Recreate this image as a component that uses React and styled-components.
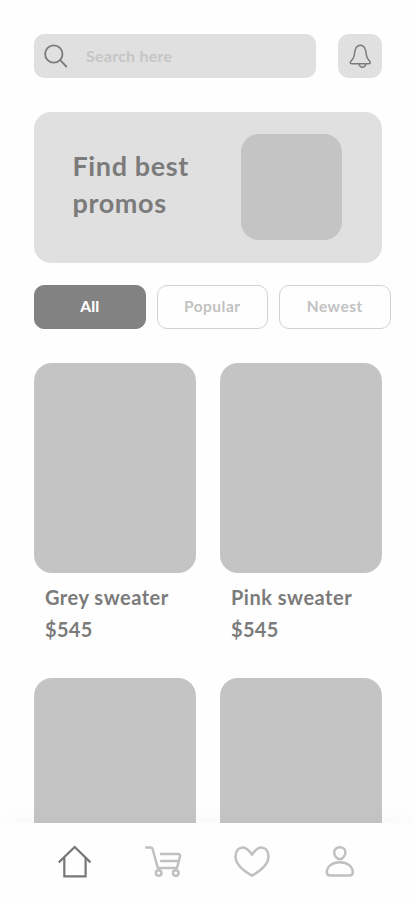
import styled, { createGlobalStyle } from 'styled-components';

const GlobalStyle = createGlobalStyle`
  * {
    box-sizing: border-box;
  }
  body {
    margin: 0;
    background: #fefefe;
    font-family: Lato, 'Open Sans', sans-serif;
    font-weight: 700;
    color: #7b7b7b;
  }
`
const Screen = styled.div`
  display: flex;
  flex-direction: column;
  width: 415px;
  height: 900px;
  overflow: hidden;
`
const Content = styled.main`
  flex: 1;
  min-height: 0;
  overflow: hidden;
  padding: 34px 24px 0 34px;
`
const TopBar = styled.div`
  display: flex;
  column-gap: 22.5px;
`
const SearchBox = styled.label`
  display: flex;
  align-items: center;
  width: 281.5px;
  height: 44px;
  padding-left: 10px;
  border-radius: 10px;
  background: #e0e0e0;
`
const SearchInput = styled.input`
  width: 220px;
  margin-left: 17px;
  padding: 0 0 1px;
  border: 0;
  outline: 0;
  background: none;
  font: 700 16px Lato, 'Open Sans', sans-serif;
  letter-spacing: 0.25px;
  color: #c4c4c4;
  &::placeholder {
    color: #c6c6c6;
    opacity: 1;
  }
`
const BellButton = styled.button`
  display: flex;
  align-items: center;
  justify-content: center;
  width: 44px;
  height: 44px;
  padding: 0;
  border: 0;
  border-radius: 11px;
  background: #e0e0e0;
  color: #7b7b7b;
`
const Banner = styled.section`
  display: flex;
  align-items: center;
  justify-content: space-between;
  width: 348px;
  height: 151.5px;
  margin-top: 33.5px;
  padding: 0 40.5px 0 38.5px;
  border-radius: 17px;
  background: #e0e0e0;
`
const BannerTitle = styled.h1`
  margin: 0 0 7px;
  font-size: 27px;
  line-height: 37px;
  font-weight: 700;
  letter-spacing: 0.6px;
`
const BannerImage = styled.div`
  width: 101px;
  height: 106px;
  border-radius: 18px;
  background: #c4c4c4;
`
const Chips = styled.div`
  display: flex;
  column-gap: 11px;
  margin-top: 22.4px;
`
const Chip = styled.button`
  width: 111.5px;
  height: 44px;
  padding: 0 0 2px;
  border: 1px solid ${p => (p.$active ? '#828282' : '#d2d2d2')};
  border-radius: 10px;
  background: ${p => (p.$active ? '#828282' : '#fefefe')};
  color: ${p => (p.$active ? '#fff' : '#c2c2c2')};
  font: ${p => (p.$active ? 900 : 700)} 15.5px Lato, 'Open Sans', sans-serif;
  letter-spacing: ${p => (p.$active ? '0.1px' : '0.5px')};
`
const Grid = styled.div`
  display: grid;
  grid-template-columns: 162px 162px;
  column-gap: 24px;
  row-gap: 33px;
  margin-top: 33.6px;
`
const ProductImage = styled.div`
  height: 210px;
  border-radius: 18px;
  background: #c4c4c4;
`
const ProductText = styled.div`
  height: 72px;
  padding: 8px 0 0 11px;
  font-size: 20px;
  line-height: 32px;
  letter-spacing: 0.5px;
  white-space: nowrap;
`
const Price = styled.div`
  letter-spacing: 0.3px;
`
const NavBar = styled.nav`
  display: flex;
  flex: none;
  justify-content: space-between;
  height: 77px;
  padding: 20px 56px 0 56px;
  background: #fefefe;
  box-shadow: 0 -4px 20px rgba(0, 0, 0, 0.025);
`
const NavItem = styled.a`
  width: 38px;
  height: 38px;
  color: ${p => (p.$active ? '#777' : '#c0c0c0')};
`
const Icon = styled.svg`
  display: block;
  flex: none;
  fill: none;
  stroke: currentColor;
  stroke-width: ${p => p.$stroke || 2.5};
  stroke-linecap: ${p => (p.$sharp ? 'butt' : 'round')};
  stroke-linejoin: ${p => (p.$sharp ? 'miter' : 'round')};
`

const products = [
  { id: 1, name: 'Grey sweater', price: '$545' },
  { id: 2, name: 'Pink sweater', price: '$545' },
  { id: 3, name: '', price: '' },
  { id: 4, name: '', price: '' },
];

const SearchIcon = () => (
  <Icon width="25" height="26" viewBox="0 0 25 26" $stroke={1.8}>
    <circle cx="9.8" cy="11" r="8.7" />
    <path d="M16.2 17.2 22.3 23.5" />
  </Icon>
)

const BellIcon = () => (
  <Icon width="24" height="26" viewBox="0 0 24 26" $stroke={1.5}>
    <path d="M2.2 20C2.2 18.4 4.4 17 5.5 14.7C6.9 11.5 6.3 8 7.8 5.3C8.7 3.2 10.3 2.2 12.3 2.2S15.9 3.2 16.9 5.3C18.3 8 17.8 11.5 19.2 14.7C20.2 17 22.3 18.4 22.3 20C22.3 20.6 21.6 20.7 20.7 20.7H4C3 20.7 2.2 20.6 2.2 20Z" />
    <path d="M11.2 21.3C12 25.2 17 25 17.6 21.3" />
  </Icon>
)

const HomeIcon = () => (
  <Icon width="38" height="38" viewBox="0 0 38 38" $stroke={2.2} $sharp>
    <path d="M2.8 19.4 18.7 4 34.5 19.4" />
    <path d="M8.3 14.5V33.3H29.6V14.5" />
  </Icon>
)

const CartIcon = () => (
  <Icon width="38" height="38" viewBox="0 0 38 38">
    <path d="M2.2 4.6H6.3C7.8 4.6 8.4 5.2 8.8 6.7L13.8 25H33L36 13.5C36.4 11.8 35.5 11 34 11H17" />
    <path d="M17.2 18H34.4" />
    <circle cx="14.7" cy="30" r="2.8" />
    <circle cx="31.8" cy="30" r="2.8" />
  </Icon>
)

const HeartIcon = () => (
  <Icon width="38" height="38" viewBox="0 0 38 38">
    <path d="M19 32.6C11.5 28.4 2.5 21.5 2.5 13.5C2.5 7.6 5.8 4.4 10 4.4C13.8 4.4 16.2 7.5 19 11.6C21.8 7.5 24.2 4.4 28 4.4C32.2 4.4 35.5 7.6 35.5 13.5C35.5 21.5 26.5 28.4 19 32.6Z" />
  </Icon>
)

const UserIcon = () => (
  <Icon width="38" height="38" viewBox="0 0 38 38">
    <path d="M18.8 4.2C15.5 4.2 13.2 6.5 13.2 9.5C13.2 12.5 15.9 16.3 18.8 16.3S24.4 12.5 24.4 9.5C24.4 6.5 22.1 4.2 18.8 4.2Z" />
    <path d="M18.8 19.2C11.1 19.2 5.8 23.6 5.8 29.3C5.8 31.7 7.3 32.6 9.6 32.6H28C30.3 32.6 31.8 31.7 31.8 29.3C31.8 23.6 26.5 19.2 18.8 19.2Z" />
  </Icon>
)

function App() {
  return (
    <Screen>
      <GlobalStyle />
      <Content>
        <TopBar>
          <SearchBox>
            <SearchIcon />
            <SearchInput placeholder="Search here" />
          </SearchBox>
          <BellButton>
            <BellIcon />
          </BellButton>
        </TopBar>
        <Banner>
          <BannerTitle>Find best<br />promos</BannerTitle>
          <BannerImage />
        </Banner>
        <Chips>
          <Chip $active>All</Chip>
          <Chip>Popular</Chip>
          <Chip>Newest</Chip>
        </Chips>
        <Grid>
          {products.map(product => (
            <div key={product.id}>
              <ProductImage />
              <ProductText>
                <div>{product.name}</div>
                <Price>{product.price}</Price>
              </ProductText>
            </div>
          ))}
        </Grid>
      </Content>
      <NavBar>
        <NavItem $active><HomeIcon /></NavItem>
        <NavItem><CartIcon /></NavItem>
        <NavItem><HeartIcon /></NavItem>
        <NavItem><UserIcon /></NavItem>
      </NavBar>
    </Screen>
  );
}

export default App;
